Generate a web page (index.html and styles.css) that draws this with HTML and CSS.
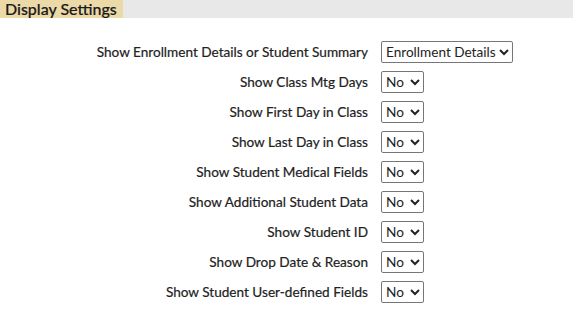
FILE: index.html
```html
<!DOCTYPE html>
<html lang="en">
<head>
	<meta charset="UTF-8">
	<title>Display Settings</title>
	<link rel="stylesheet" href="styles.css">
</head>
<body>
	<div class="section-head">
		<span class="section-title">Display Settings</span>
	</div>
	<div class="settings">
		<label class="setting-label">Show Enrollment Details or Student Summary</label>
		<div><select class="setting-select"><option>Enrollment Details</option><option>Student Summary</option></select></div>

		<label class="setting-label">Show Class Mtg Days</label>
		<div><select class="setting-select"><option>No</option><option>Yes</option></select></div>

		<label class="setting-label">Show First Day in Class</label>
		<div><select class="setting-select"><option>No</option><option>Yes</option></select></div>

		<label class="setting-label">Show Last Day in Class</label>
		<div><select class="setting-select"><option>No</option><option>Yes</option></select></div>

		<label class="setting-label">Show Student Medical Fields</label>
		<div><select class="setting-select"><option>No</option><option>Yes</option></select></div>

		<label class="setting-label">Show Additional Student Data</label>
		<div><select class="setting-select"><option>No</option><option>Yes</option></select></div>

		<label class="setting-label">Show Student ID</label>
		<div><select class="setting-select"><option>No</option><option>Yes</option></select></div>

		<label class="setting-label">Show Drop Date &amp; Reason</label>
		<div><select class="setting-select"><option>No</option><option>Yes</option></select></div>

		<label class="setting-label">Show Student User-defined Fields</label>
		<div><select class="setting-select"><option>No</option><option>Yes</option></select></div>
	</div>
</body>
</html>
```

FILE: styles.css
```css
body {
	margin: 0;
	font-family: Lato, "Open Sans", sans-serif;
	color: #222;
	background: #fff;
}
.section-head {
	background: #e8e8e8;
	height: 18px;
	display: flex;
}
.section-title {
	background: #ecd9a8;
	font-size: 16px;
	font-weight: 500;
	line-height: 18px;
	padding: 0 4px 0 5px;
	width: 114px;
	color: #1a1a1a;
	-webkit-text-stroke: 0.2px #1a1a1a;
}
.settings {
	display: grid;
	grid-template-columns: 368px auto;
	grid-auto-rows: 22px;
	column-gap: 13px;
	row-gap: 8px;
	margin-top: 23px;
	align-items: center;
}
.setting-label {
	text-align: right;
	font-size: 13.6px;
	color: #222;
	-webkit-text-stroke: 0.2px #222;
}
.setting-select {
	font-family: Lato, sans-serif;
	font-size: 13.6px;
	height: 22px;
	border: 1px solid #767676;
	border-radius: 2px;
	background: #fff;
	color: #222;
}
```
